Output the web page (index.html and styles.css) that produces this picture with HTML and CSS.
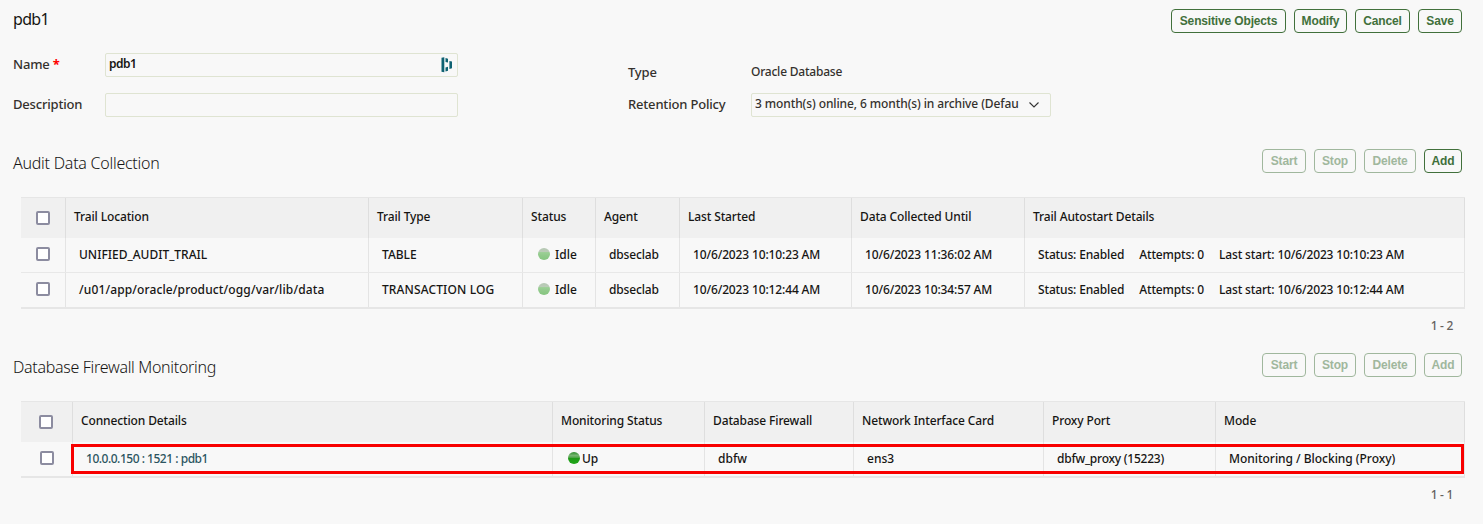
FILE: index.html
```html
<!DOCTYPE html>
<html lang="en">
<head>
<meta charset="utf-8">
<title>pdb1</title>
<link rel="stylesheet" href="styles.css">
</head>
<body>
<header class="bar top">
  <h1 class="title">pdb1</h1>
  <div class="buttons">
    <button class="btn w-sensitive">Sensitive Objects</button>
    <button class="btn w-modify">Modify</button>
    <button class="btn w-cancel">Cancel</button>
    <button class="btn w-save">Save</button>
  </div>
</header>
<section class="form">
  <div class="fields">
    <label class="label">Name <span class="req">*</span></label>
    <div class="input"><span class="t-name">pdb1</span>
      <svg class="dash" width="12" height="16" viewBox="0 0 12 16" fill="#0e6172"><path d="M.5 .8L3.3 .3V15.3L.5 14.8ZM4.5 1L7 1.8V5.6L4.5 5ZM4.5 10.4L7 9.8V13.8L4.5 14.6ZM8.4 4L11 4.6V11.2L8.4 11.9Z"/></svg>
    </div>
    <label class="label">Description</label>
    <div class="input"></div>
  </div>
  <div class="fields right">
    <span class="label type">Type</span>
    <span class="value">Oracle Database</span>
    <label class="label">Retention Policy</label>
    <div class="input select"><span class="choice">3 month(s) online, 6 month(s) in archive (Defau</span>
      <svg width="12" height="8" viewBox="0 0 12 8" fill="none" stroke="#333" stroke-width="1.1"><path d="M1.5 1.5L6 6L10.5 1.5"/></svg>
    </div>
  </div>
</section>
<section class="bar audit">
  <h2 class="heading">Audit Data Collection</h2>
  <div class="buttons">
    <button class="btn off w-start">Start</button>
    <button class="btn off w-stop">Stop</button>
    <button class="btn off w-delete">Delete</button>
    <button class="btn w-add">Add</button>
  </div>
</section>
<div class="grid trails">
  <div class="row head">
    <div class="check"><i class="box"></i></div><div>Trail Location</div><div>Trail Type</div><div>Status</div><div>Agent</div><div>Last Started</div><div>Data Collected Until</div><div>Trail Autostart Details</div>
  </div>
  <div class="row">
    <div class="check"><i class="box"></i></div><div>UNIFIED_AUDIT_TRAIL</div><div>TABLE</div><div class="status"><i class="dot idle"></i><span>Idle</span></div><div class="t-agent">dbseclab</div><div class="t-date">10/6/2023 10:10:23 AM</div><div class="t-date">10/6/2023 11:36:02 AM</div><div class="details"><span>Status: Enabled</span><span>Attempts: 0</span><span>Last start: 10/6/2023 10:10:23 AM</span></div>
  </div>
  <div class="row last">
    <div class="check"><i class="box"></i></div><div class="t-path">/u01/app/oracle/product/ogg/var/lib/data</div><div class="t-log">TRANSACTION LOG</div><div class="status"><i class="dot idle"></i><span>Idle</span></div><div class="t-agent">dbseclab</div><div class="t-date">10/6/2023 10:12:44 AM</div><div class="t-date">10/6/2023 10:34:57 AM</div><div class="details"><span>Status: Enabled</span><span>Attempts: 0</span><span>Last start: 10/6/2023 10:12:44 AM</span></div>
  </div>
</div>
<div class="pager">1 - 2</div>
<section class="bar firewall">
  <h2 class="heading t-fw">Database Firewall Monitoring</h2>
  <div class="buttons">
    <button class="btn off w-start">Start</button>
    <button class="btn off w-stop">Stop</button>
    <button class="btn off w-delete">Delete</button>
    <button class="btn off w-add">Add</button>
  </div>
</section>
<div class="grid monitors">
  <div class="row head">
    <div class="check"><i class="box"></i></div><div>Connection Details</div><div>Monitoring Status</div><div>Database Firewall</div><div>Network Interface Card</div><div>Proxy Port</div><div>Mode</div>
  </div>
  <div class="row last">
    <div class="check shifted"><i class="box"></i></div><div><a class="link">10.0.0.150 : 1521 : pdb1</a></div><div class="status up"><i class="dot"></i><span>Up</span></div><div>dbfw</div><div>ens3</div><div class="t-proxy">dbfw_proxy (15223)</div><div class="t-mode">Monitoring / Blocking (Proxy)</div>
  </div>
  <div class="highlight"></div>
</div>
<div class="pager">1 - 1</div>
</body>
</html>
```
FILE: styles.css
```css
* { box-sizing: border-box; }
body {
  margin: 0;
  height: 524px;
  overflow: hidden;
  background: #f8f8f8;
  color: #161513;
  font: 500 12px/18px "Noto Sans", sans-serif;
}
h1, h2 { margin: 0; }
.bar {
  display: flex;
  justify-content: space-between;
  height: 24px;
  padding: 0 21px 0 13px;
}
.top { margin-top: 9px; }
.title { font-size: 16px; font-weight: 400; line-height: 21px; letter-spacing: -.7px; }
.heading { font-size: 16px; font-weight: 300; line-height: 28px; letter-spacing: -.25px; }
.t-fw { letter-spacing: -.31px; }
.buttons { display: flex; gap: 8px; }
.btn {
  height: 24px;
  padding: 0;
  border: 1px solid #41703b;
  border-radius: 4px;
  background: #f8f8f8;
  color: #41703b;
  font: bold 12px/20px "Liberation Sans", sans-serif;
  letter-spacing: -.15px;
  white-space: nowrap;
}
.off { border-color: #a0b79d; color: #a0b79d; }
.w-sensitive { width: 115px; }
.w-modify { width: 53px; }
.w-cancel { width: 55px; }
.w-save, .w-start { width: 44px; }
.w-stop { width: 42px; }
.w-delete { width: 52px; }
.w-add { width: 38px; }

.form { display: flex; gap: 170px; padding: 20px 0 0 13px; }
.fields {
  display: grid;
  grid-template-columns: 92px 353px;
  grid-template-rows: 24px 24px;
  row-gap: 16px;
}
.right { grid-template-columns: 123px 300px; }
.label { font-size: 13px; line-height: 23px; color: #34312d; letter-spacing: -.18px; }
.req { color: #f00; font-weight: 700; }
.type { padding-top: 8px; }
.value { padding-top: 7px; line-height: 24px; color: #34312d; letter-spacing: -.22px; }
.input {
  display: flex;
  justify-content: space-between;
  height: 24px;
  padding: 0 4px 0 3px;
  border: 1px solid #dfe4d2;
  border-radius: 2px;
  line-height: 20px;
}
.t-name { font-weight: 600; letter-spacing: -.55px; }
.dash { margin-top: 3px; }
.select { padding-right: 10px; color: #34312d; }
.select svg { margin-top: 7px; }
.choice { white-space: nowrap; letter-spacing: -.1px; }

.audit { margin-top: 32px; }
.grid { position: relative; width: 1444px; margin: 24px 0 0 21px; }
.row { display: grid; height: 35px; border-bottom: 1px solid #e8e8e8; }
.trails .row { grid-template-columns: 45px 303px 154px 73px 84px 172px 173px 440px; }
.monitors .row { grid-template-columns: 52px 480px 152px 149px 190px 172px 249px; }
.row > div {
  padding: 0 0 0 13px;
  border-right: 1px solid #e4e4e4;
  line-height: 34px;
  white-space: nowrap;
}
.row.head { height: 41px; border-top: 1px solid #e6e6e6; border-bottom: 0; background: #f0f0f0; }
.head > div { padding-left: 8px; line-height: 38px; letter-spacing: -.13px; border-right-color: #dedede; }
.row.last { height: 36px; border-bottom: 2px solid #e6e6e6; }
.row > .check { padding: 9px 0 0 15px; }
.row > .check.shifted { padding-left: 19px; }
.head > .check { padding-top: 13px; }
.monitors .head > .check { padding-left: 18px; }
.box {
  display: block;
  width: 14px;
  height: 14px;
  border: 2px solid #8c8ca0;
  border-radius: 2px;
  background: #fff;
}
.row > .status { display: flex; padding-left: 15px; gap: 5px; line-height: 33px; }
.row > .up { gap: 2px; }
.dot {
  width: 12px;
  height: 12px;
  margin-top: 10px;
  border-radius: 50%;
  background: linear-gradient(#2d8b2d 0%, #77b571 30%, #4ea548 46%, #1f9818 50%, #20a718 100%);
}
.idle { background: linear-gradient(#b5c8b3 0%, #bbcbb8 30%, #9bcf95 38%, #92ca8c 60%, #85c57f 100%); }
.details { display: flex; gap: 15px; letter-spacing: -.15px; }
.t-date { letter-spacing: -.14px; }
.t-agent { letter-spacing: -.15px; }
.t-path, .t-log { letter-spacing: .13px; }
.link { color: #2b5560; letter-spacing: -.48px; }
.t-proxy { letter-spacing: -.24px; }
.t-mode { letter-spacing: -.03px; }
.highlight {
  position: absolute;
  left: 50px;
  top: 43px;
  width: 1393px;
  height: 30px;
  border: 3px solid #f80000;
}
.pager { padding: 8px 30px 0 0; text-align: right; color: #65625e; letter-spacing: -.3px; }
.firewall { margin-top: 18px; }
```
